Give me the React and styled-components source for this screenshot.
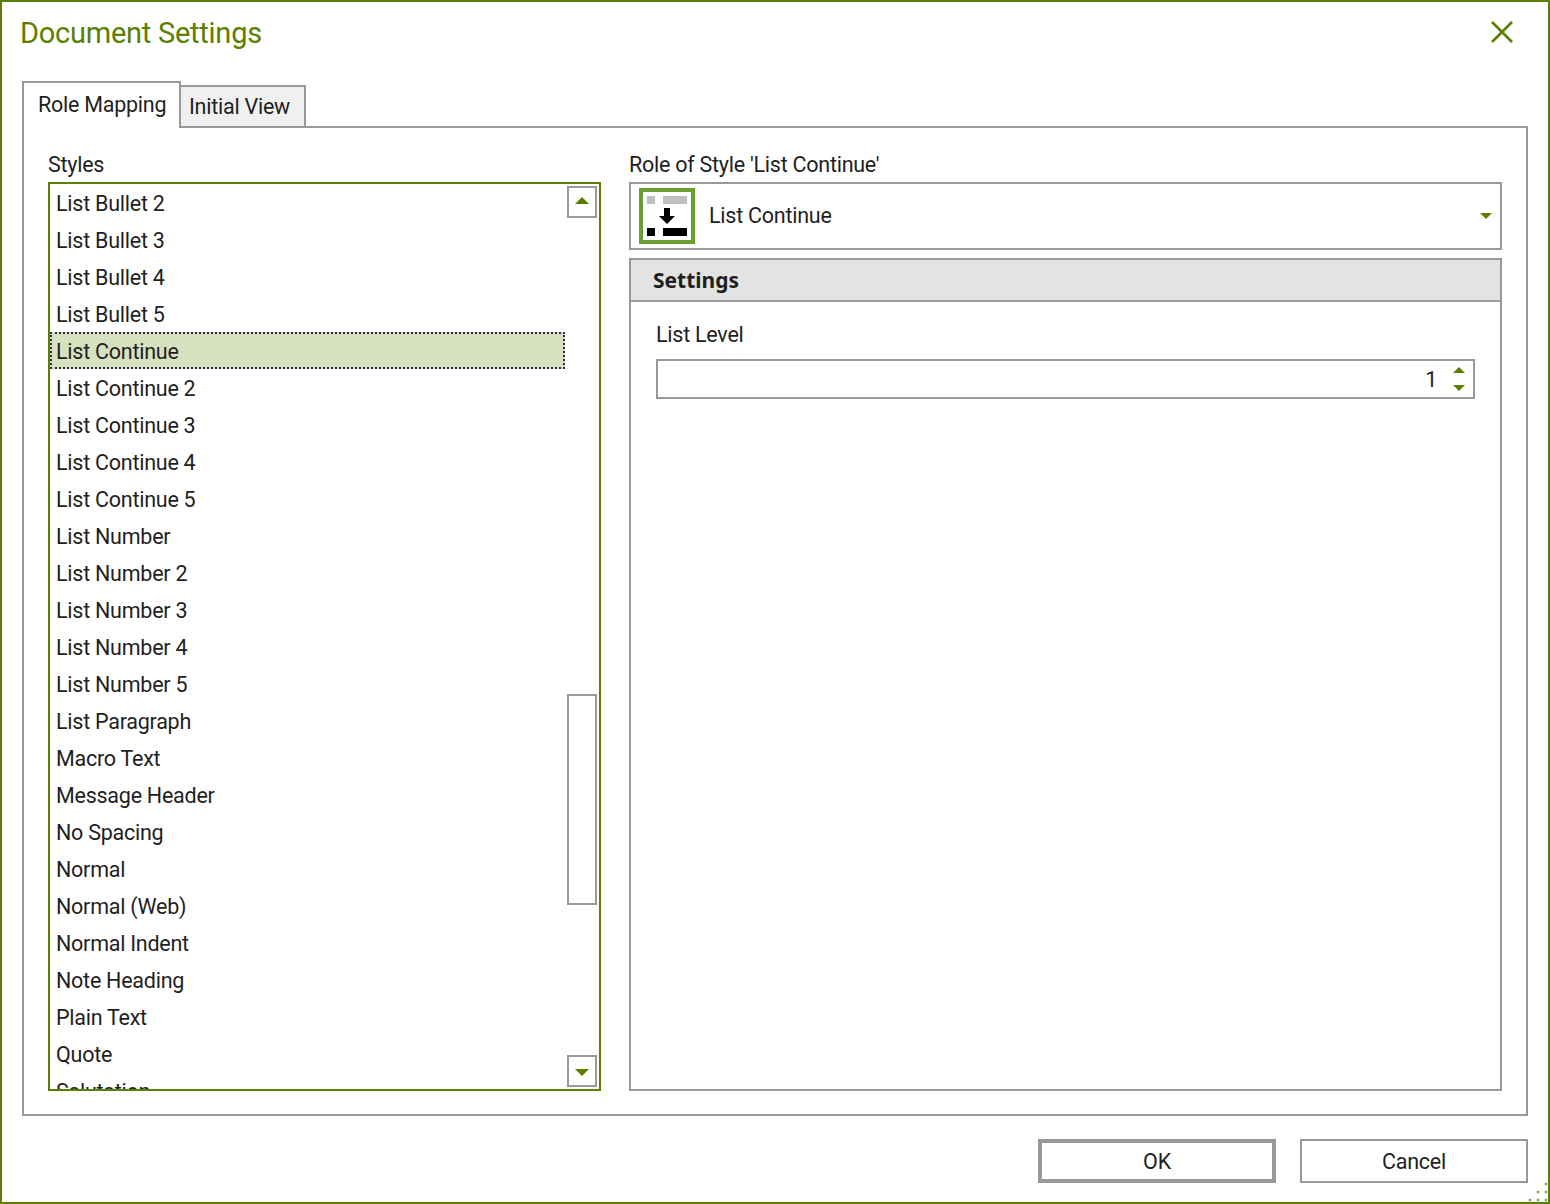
import React from 'react'
import styled, { createGlobalStyle } from 'styled-components'

const green = '#5b7f00'
const grey = '#999999'
const textColor = '#1f1f1f'

const GlobalStyle = createGlobalStyle`
  html, body {
    margin: 0;
    background: #fff;
  }
  * {
    box-sizing: border-box;
  }
`

const Dialog = styled.div`
  position: relative;
  width: 1550px;
  height: 1204px;
  border: 2px solid ${green};
  background: #fff;
  color: ${textColor};
  font-family: Roboto, "Noto Sans", sans-serif;
  font-size: 21.5px;
  letter-spacing: -0.25px;
  overflow: hidden;
`

const TitleBar = styled.div`
  display: flex;
  align-items: flex-start;
  justify-content: space-between;
  height: 79px;
  padding: 11px 26px 0 18px;
`

const Title = styled.h1`
  margin: 0;
  color: ${green};
  font-size: 29px;
  font-weight: 400;
  line-height: 40px;
`

const CloseButton = styled.button`
  display: block;
  width: 24px;
  height: 24px;
  margin: 7px 8px 0 0;
  padding: 0;
  border: none;
  background: none;
`

const TabRow = styled.div`
  position: relative;
  z-index: 1;
  display: flex;
  align-items: flex-end;
  height: 47px;
  margin: 0 20px -2px;
`

const Tab = styled.div`
  display: flex;
  align-items: center;
  border: 2px solid ${grey};
  ${({ active }) => active ? `
    width: 159px;
    height: 47px;
    padding: 0 0 2px 14px;
    border-bottom: none;
    background: #fff;
    margin-right: -2px;
    position: relative;
    z-index: 1;
  ` : `
    width: 127px;
    height: 43px;
    padding: 0 0 0 8px;
    background: #f0f0f0;
  `}
`

const TabPanel = styled.div`
  display: grid;
  grid-template-columns: 553px 873px;
  column-gap: 28px;
  height: 990px;
  margin: 0 20px;
  padding: 24px 24px 23px;
  border: 2px solid ${grey};
`

const Column = styled.div`
  display: flex;
  flex-direction: column;
  min-height: 0;
`

const FieldLabel = styled.label`
  display: block;
  height: 30px;
  line-height: 25px;
`

const StyleList = styled.div`
  display: flex;
  flex: 1;
  min-height: 0;
  border: 2px solid ${green};
`

const Items = styled.ul`
  flex: none;
  width: 515px;
  margin: 0;
  padding: 0;
  list-style: none;
  overflow: hidden;
`

const Item = styled.li`
  height: 37px;
  padding-left: 6px;
  line-height: 39px;
  white-space: nowrap;
  ${({ selected }) => selected && `
    background: #d8e1bf;
    outline: 2px dotted #2b2b4a;
    outline-offset: -2px;
  `}
`

const Scrollbar = styled.div`
  display: flex;
  flex-direction: column;
  flex: none;
  width: 30px;
  margin: 2px 0 2px 2px;
`

const ScrollButton = styled.div`
  display: flex;
  align-items: center;
  justify-content: center;
  flex: none;
  height: 32px;
  border: 2px solid ${grey};
  margin-top: ${({ end }) => end ? 'auto' : '0'};
  padding: ${({ end }) => end ? '3px 0 0' : '0 0 3px'};
`

const Thumb = styled.div`
  flex: none;
  height: 211px;
  margin-top: 476px;
  border: 2px solid ${grey};
`

const Arrow = styled.span`
  display: block;
  width: 0;
  height: 0;
  border-left: ${({ size }) => size}px solid transparent;
  border-right: ${({ size }) => size}px solid transparent;
  ${({ up, size }) => up
    ? `border-bottom: ${size}px solid ${green};`
    : `border-top: ${size}px solid ${green};`}
`

const RoleCombo = styled.div`
  display: flex;
  align-items: center;
  height: 68px;
  margin-bottom: 8px;
  padding: 0 8px;
  border: 2px solid ${grey};
`

const RoleName = styled.span`
  flex: 1;
  padding-left: 14px;
  line-height: 30px;
`

const SettingsPanel = styled.section`
  flex: 1;
  min-height: 0;
  border: 2px solid ${grey};
`

const SettingsHeader = styled.h2`
  height: 42px;
  margin: 0;
  padding-left: 22px;
  border-bottom: 2px solid ${grey};
  background: #e3e3e3;
  font-family: "Noto Sans", sans-serif;
  font-size: 21px;
  font-weight: 700;
  letter-spacing: 0;
  line-height: 40px;
`

const SettingsBody = styled.div`
  padding: 19px 25px 0;
`

const LevelLabel = styled.label`
  display: block;
  height: 38px;
  line-height: 28px;
`

const SpinBox = styled.div`
  display: flex;
  align-items: center;
  justify-content: flex-end;
  height: 40px;
  padding-right: 8px;
  border: 2px solid ${grey};
`

const SpinValue = styled.span`
  margin-right: 16px;
`

const SpinArrows = styled.div`
  display: flex;
  flex-direction: column;
  gap: 12px;
`

const Footer = styled.div`
  display: flex;
  justify-content: flex-end;
  gap: 24px;
  margin: 23px 20px 0 0;
`

const Button = styled.button`
  height: 44px;
  width: ${({ primary }) => primary ? '238px' : '228px'};
  padding: 0;
  border: ${({ primary }) => primary ? '4px' : '2px'} solid ${grey};
  background: #fff;
  color: ${textColor};
  font: inherit;
  letter-spacing: inherit;
`

const Grip = styled.svg`
  position: absolute;
  right: 0;
  bottom: 0;
`

const styleNames = [
  'List Bullet 2', 'List Bullet 3', 'List Bullet 4', 'List Bullet 5',
  'List Continue', 'List Continue 2', 'List Continue 3', 'List Continue 4',
  'List Continue 5', 'List Number', 'List Number 2', 'List Number 3',
  'List Number 4', 'List Number 5', 'List Paragraph', 'Macro Text',
  'Message Header', 'No Spacing', 'Normal', 'Normal (Web)',
  'Normal Indent', 'Note Heading', 'Plain Text', 'Quote', 'Salutation',
]

const RoleIcon = () => (
  <svg width="56" height="56" viewBox="0 0 56 56" style={{ flex: 'none' }}>
    <rect x="2" y="2" width="52" height="52" fill="#fff" stroke="#6c9d2f" strokeWidth="4" />
    <rect x="8" y="8" width="8" height="8" fill="#bfbfbf" />
    <rect x="24" y="8" width="24" height="8" fill="#bfbfbf" />
    <path d="M25 20h6v8h5l-8 8-8-8h5z" fill="#000" />
    <rect x="8" y="40" width="8" height="8" fill="#000" />
    <rect x="24" y="40" width="24" height="8" fill="#000" />
  </svg>
)

const App = () => (
  <>
    <GlobalStyle />
    <Dialog>
      <TitleBar>
        <Title>Document Settings</Title>
        <CloseButton aria-label="Close">
          <svg width="24" height="24" viewBox="0 0 24 24">
            <path d="M2 2l20 20M22 2L2 22" stroke={green} strokeWidth="2.6" fill="none" />
          </svg>
        </CloseButton>
      </TitleBar>
      <TabRow>
        <Tab active>Role Mapping</Tab>
        <Tab>Initial View</Tab>
      </TabRow>
      <TabPanel>
        <Column>
          <FieldLabel>Styles</FieldLabel>
          <StyleList>
            <Items>
              {styleNames.map((name) => (
                <Item key={name} selected={name === 'List Continue'}>{name}</Item>
              ))}
            </Items>
            <Scrollbar>
              <ScrollButton><Arrow up size={7} /></ScrollButton>
              <Thumb />
              <ScrollButton end><Arrow size={7} /></ScrollButton>
            </Scrollbar>
          </StyleList>
        </Column>
        <Column>
          <FieldLabel>Role of Style 'List Continue'</FieldLabel>
          <RoleCombo>
            <RoleIcon />
            <RoleName>List Continue</RoleName>
            <Arrow size={6} />
          </RoleCombo>
          <SettingsPanel>
            <SettingsHeader>Settings</SettingsHeader>
            <SettingsBody>
              <LevelLabel>List Level</LevelLabel>
              <SpinBox>
                <SpinValue>1</SpinValue>
                <SpinArrows>
                  <Arrow up size={6} />
                  <Arrow size={6} />
                </SpinArrows>
              </SpinBox>
            </SettingsBody>
          </SettingsPanel>
        </Column>
      </TabPanel>
      <Footer>
        <Button primary>OK</Button>
        <Button>Cancel</Button>
      </Footer>
      <Grip width="24" height="24" viewBox="0 0 24 24" fill="#8fae5a">
        <circle cx="22" cy="6" r="1.5" />
        <circle cx="14" cy="14" r="1.5" />
        <circle cx="22" cy="14" r="1.5" />
        <circle cx="6" cy="22" r="1.5" />
        <circle cx="14" cy="22" r="1.5" />
        <circle cx="22" cy="22" r="1.5" />
      </Grip>
    </Dialog>
  </>
)

export default App
